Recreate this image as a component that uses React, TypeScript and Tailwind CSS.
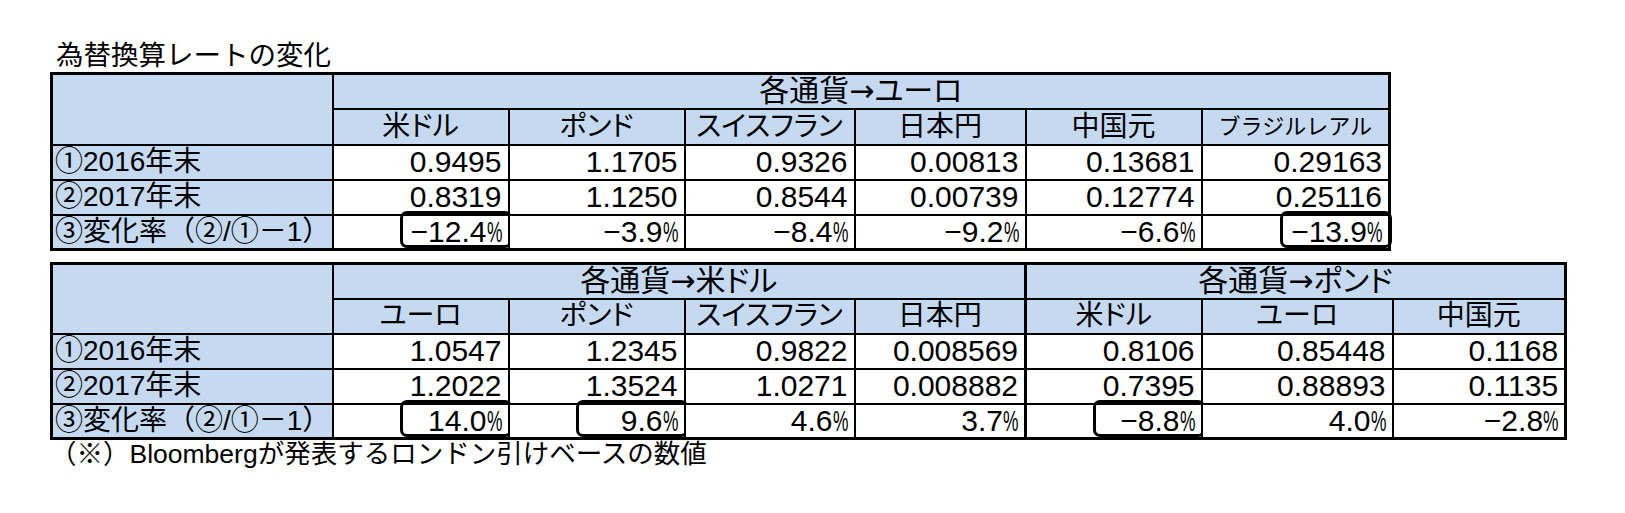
import React from "react";

const font = "font-['Liberation_Sans','Noto_Sans_CJK_JP',sans-serif]";

type Row = { label: string; vals: string[]; boxes?: number[] };

const t1Head = ["米ドル", "ポンド", "スイスフラン", "日本円", "中国元", "ブラジルレアル"];
const t1Rows: Row[] = [
  { label: "①2016年末", vals: ["0.9495", "1.1705", "0.9326", "0.00813", "0.13681", "0.29163"] },
  { label: "②2017年末", vals: ["0.8319", "1.1250", "0.8544", "0.00739", "0.12774", "0.25116"] },
  {
    label: "③変化率（②/①－1）",
    vals: ["−12.4%", "−3.9%", "−8.4%", "−9.2%", "−6.6%", "−13.9%"],
    boxes: [0, 5],
  },
];

const t2Head = ["ユーロ", "ポンド", "スイスフラン", "日本円", "米ドル", "ユーロ", "中国元"];
const t2Rows: Row[] = [
  { label: "①2016年末", vals: ["1.0547", "1.2345", "0.9822", "0.008569", "0.8106", "0.85448", "0.1168"] },
  { label: "②2017年末", vals: ["1.2022", "1.3524", "1.0271", "0.008882", "0.7395", "0.88893", "0.1135"] },
  {
    label: "③変化率（②/①－1）",
    vals: ["14.0%", "9.6%", "4.6%", "3.7%", "−8.8%", "4.0%", "−2.8%"],
    boxes: [0, 1, 4],
  },
];

const cell = "border-2 border-black p-0 leading-none";
const blue = "bg-[#c5d9f1]";
const head = "font-normal text-[28px] [font-feature-settings:'palt']";
const group = "font-normal text-[30px] [font-feature-settings:'palt']";

// the highlight frame drawn over a cell
const Box = () => (
  <span className="pointer-events-none absolute right-[-4px] top-[-5px] bottom-0 w-[112px] rounded-[7px] border-[3px] border-black" />
);

// excel's % is a narrow glyph
const Num = ({ v }: { v: string }) => {
  if (!v.endsWith("%")) return <>{v}</>;
  return (
    <>
      {v.slice(0, -1)}
      <span className="inline-block w-[15px] origin-left scale-x-[0.58]">%</span>
    </>
  );
};

const Group = ({ to }: { to: string }) => (
  <>
    各通貨<span className="font-['DejaVu_Sans',sans-serif]">→</span>
    {to}
  </>
);

const DataRows = ({ rows, thickAt }: { rows: Row[]; thickAt?: number }) => (
  <>
    {rows.map((r) => (
      <tr key={r.label} className="h-[35px]">
        <td className={`${cell} ${blue} pl-[2px] text-left text-[28px]`}>{r.label}</td>
        {r.vals.map((v, i) => (
          <td
            key={i}
            className={`${cell} relative bg-white pr-[6px] text-right text-[30px] ${
              i === thickAt ? "border-l-[3px]" : ""
            }`}
          >
            <Num v={v} />
            {r.boxes?.includes(i) && <Box />}
          </td>
        ))}
      </tr>
    ))}
  </>
);

export default function App() {
  return (
    <div className={`${font} min-h-[513px] bg-white pl-[50px] pt-[40px] text-[26.5px] text-black`}>
      <div className="pl-[6px] text-[27.5px] leading-[32px]">為替換算レートの変化</div>

      <table className="w-[1338px] table-fixed border-collapse border-[3px] border-black">
        <colgroup>
          <col className="w-[281px]" />
          <col className="w-[176px]" />
          <col className="w-[176px]" />
          <col className="w-[170px]" />
          <col className="w-[171px]" />
          <col className="w-[176px]" />
          <col className="w-[188px]" />
        </colgroup>
        <tbody>
          <tr className="h-[35px]">
            <td rowSpan={2} className={`${cell} ${blue}`} />
            <th colSpan={6} className={`${cell} ${blue} ${group}`}>
              <Group to="ユーロ" />
            </th>
          </tr>
          <tr className="h-[36px]">
            {t1Head.map((h, i) => (
              <th
                key={i}
                className={`${cell} ${blue} ${i === 5 ? "font-normal text-[22px]" : head}`}
              >
                {h}
              </th>
            ))}
          </tr>
          <DataRows rows={t1Rows} />
        </tbody>
      </table>

      <table className="mt-[11px] w-[1514px] table-fixed border-collapse border-[3px] border-black">
        <colgroup>
          <col className="w-[281px]" />
          <col className="w-[176px]" />
          <col className="w-[176px]" />
          <col className="w-[170px]" />
          <col className="w-[171px]" />
          <col className="w-[176px]" />
          <col className="w-[191px]" />
          <col className="w-[173px]" />
        </colgroup>
        <tbody>
          <tr className="h-[35px]">
            <td rowSpan={2} className={`${cell} ${blue}`} />
            <th colSpan={4} className={`${cell} ${blue} ${group}`}>
              <Group to="米ドル" />
            </th>
            <th colSpan={3} className={`${cell} ${blue} ${group} border-l-[3px]`}>
              <Group to="ポンド" />
            </th>
          </tr>
          <tr className="h-[35px]">
            {t2Head.map((h, i) => (
              <th
                key={i}
                className={`${cell} ${blue} ${head} ${i === 4 ? "border-l-[3px]" : ""}`}
              >
                {h}
              </th>
            ))}
          </tr>
          <DataRows rows={t2Rows} thickAt={4} />
        </tbody>
      </table>

      <div className="leading-[28px]">（※）Bloombergが発表するロンドン引けベースの数値</div>
    </div>
  );
}
